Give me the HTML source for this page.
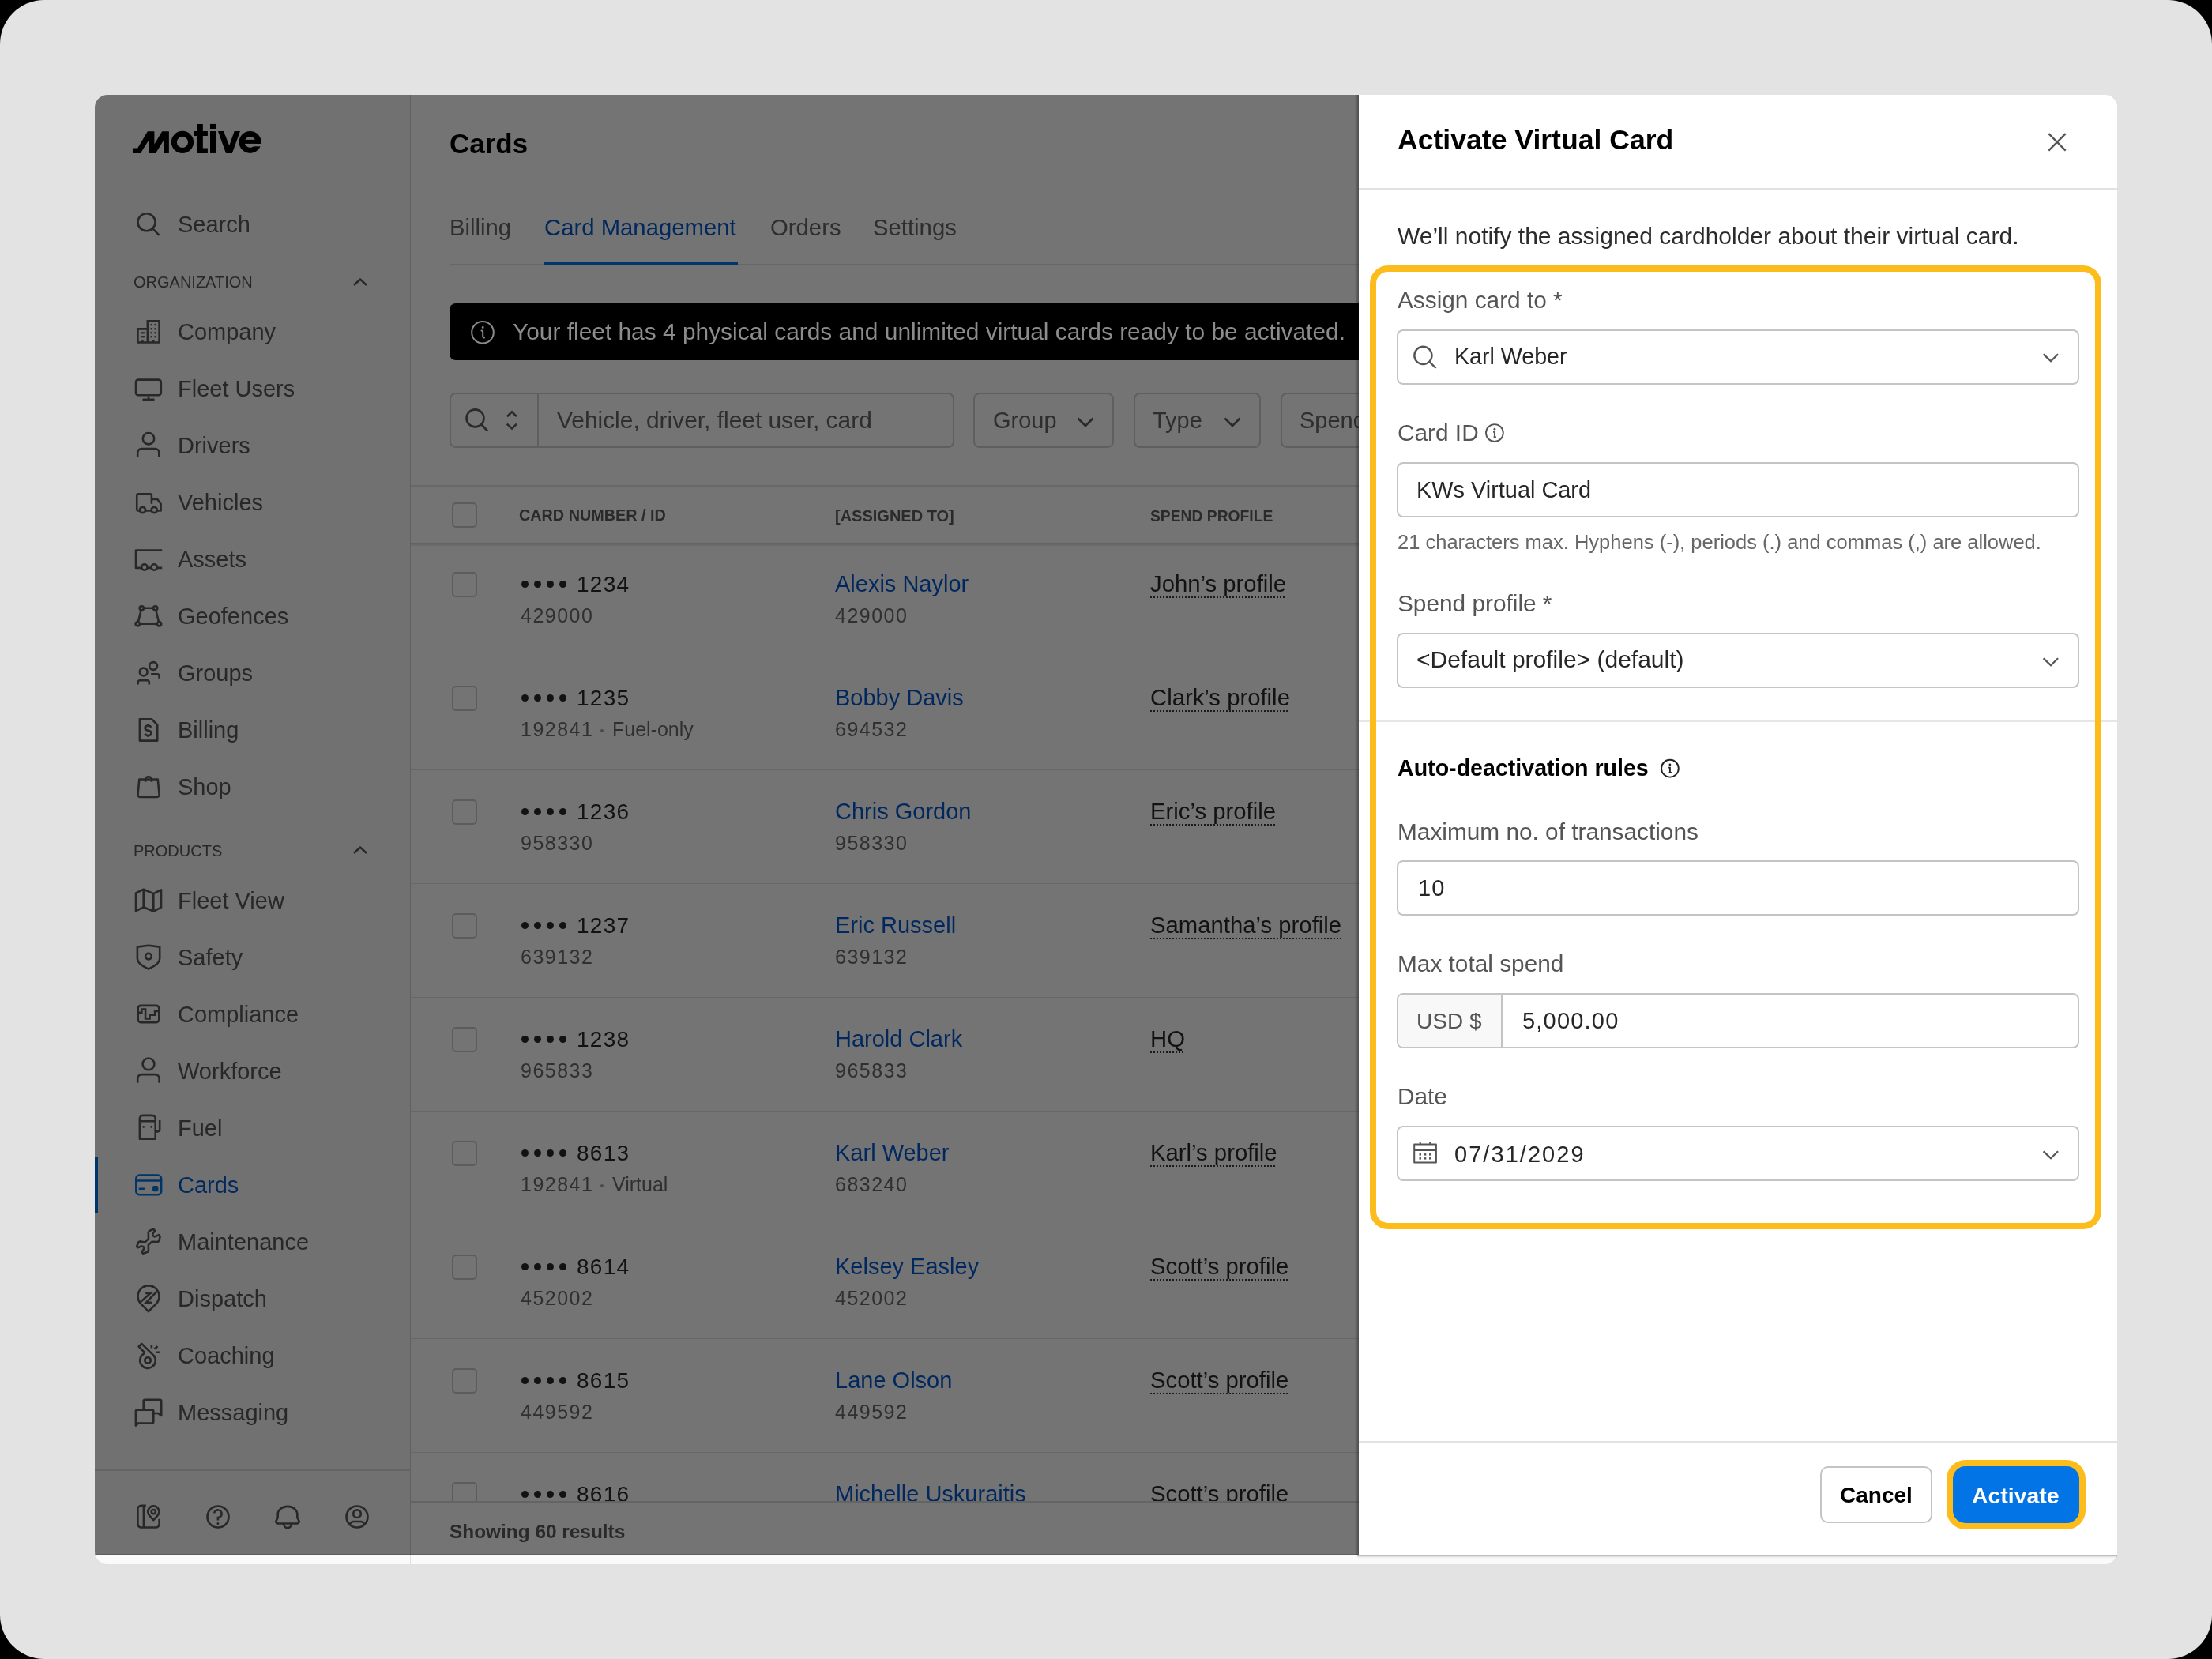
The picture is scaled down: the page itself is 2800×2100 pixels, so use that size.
<!DOCTYPE html><html><head><meta charset="utf-8"><style>
html,body{margin:0;padding:0;}
body{width:2800px;height:2100px;background:#000;position:relative;overflow:hidden;font-family:"Liberation Sans", sans-serif;}
.t{position:absolute;white-space:nowrap;will-change:transform;}
.r{position:absolute;box-sizing:border-box;}
.ic{position:absolute;overflow:visible;}
</style></head><body>
<div class="r" style="left:0px;top:0px;width:2800px;height:2100px;background:#e3e3e3;border-radius:56px;"></div>
<div class="r" style="left:120px;top:120px;width:2560px;height:1860px;border-radius:16px;overflow:hidden;background:#fafafa;">
<div class="r" style="left:0px;top:0px;width:400px;height:1848px;background:#717171;"></div>
<div class="r" style="left:400px;top:0px;width:1200px;height:1848px;background:#747474;"></div>
<div class="r" style="left:399px;top:0px;width:1px;height:1860px;background:#616161;"></div>
<div class="r" style="left:399px;top:1848px;width:1px;height:12px;background:#e0e0e0;"></div>
</div>
<svg class="ic" style="left:160px;top:150px" width="180" height="55" viewBox="0 0 180 55">
<path fill="#000" d="M7.97 43.94 L7.97 37.43 L14.24 37.43 L26.85 16.27 L35.40 16.27 L35.40 32.55 L45.16 16.27 L53.87 16.27 L53.87 43.94 L47.03 43.94 L47.03 27.67 L37.03 43.94 L28.07 43.94 L28.07 27.67 L17.90 43.94 Z"/>
<circle cx="70.96" cy="29.95" r="10.6" fill="none" stroke="#000" stroke-width="7"/>
<path fill="#000" d="M89.76 6.92 H96.83 V16.03 H102.9 V21.97 H96.83 V37.43 H102.9 V43.94 H89.76 V21.97 H85.6 V16.03 H89.76 Z"/>
<rect x="106" y="6.92" width="7.1" height="6.1" fill="#000"/>
<rect x="106" y="16.03" width="7.1" height="27.91" fill="#000"/>
<path fill="#000" d="M115.96 16.03 H123.0 L130.2 34.2 L136.7 16.03 H144.0 L133.9 43.94 H126.0 Z"/>
<circle cx="156.6" cy="29.95" r="10.45" fill="none" stroke="#000" stroke-width="7"/>
<rect x="157" y="31.9" width="15" height="3.4" fill="#717171"/>
<rect x="148" y="26.85" width="22.3" height="5.05" fill="#000"/>
</svg>
<div class="t" style="left:225.0px;top:269.5px;font-size:29px;line-height:29px;color:#282828;">Search</div>
<svg class="ic" style="left:168px;top:264px" width="40" height="40" viewBox="0 0 40 40" fill="none" stroke="#282828" stroke-width="2.6" stroke-linejoin="round"><circle cx="17.5" cy="17.25" r="11"/><path d="M25.6 25.6 L33.6 33.8"/></svg>
<div class="t" style="left:169.0px;top:347.1px;font-size:20px;line-height:20px;color:#282828;">ORGANIZATION</div>
<svg class="ic" style="left:440px;top:344.5px" width="32" height="32" viewBox="0 0 32 32" fill="none" stroke="#282828" stroke-width="2.4" stroke-linejoin="round"><path d="M8 16 L16 8.5 L24 16"/></svg>
<div class="t" style="left:169.0px;top:1067.1px;font-size:20px;line-height:20px;color:#282828;">PRODUCTS</div>
<svg class="ic" style="left:440px;top:1064px" width="32" height="32" viewBox="0 0 32 32" fill="none" stroke="#282828" stroke-width="2.4" stroke-linejoin="round"><path d="M8 16 L16 8.5 L24 16"/></svg>
<div class="t" style="left:225.0px;top:405.5px;font-size:29px;line-height:29px;color:#282828;">Company</div>
<div class="t" style="left:225.0px;top:477.5px;font-size:29px;line-height:29px;color:#282828;">Fleet Users</div>
<div class="t" style="left:225.0px;top:549.5px;font-size:29px;line-height:29px;color:#282828;">Drivers</div>
<div class="t" style="left:225.0px;top:621.5px;font-size:29px;line-height:29px;color:#282828;">Vehicles</div>
<div class="t" style="left:225.0px;top:693.5px;font-size:29px;line-height:29px;color:#282828;">Assets</div>
<div class="t" style="left:225.0px;top:765.5px;font-size:29px;line-height:29px;color:#282828;">Geofences</div>
<div class="t" style="left:225.0px;top:837.5px;font-size:29px;line-height:29px;color:#282828;">Groups</div>
<div class="t" style="left:225.0px;top:909.5px;font-size:29px;line-height:29px;color:#282828;">Billing</div>
<div class="t" style="left:225.0px;top:981.5px;font-size:29px;line-height:29px;color:#282828;">Shop</div>
<div class="t" style="left:225.0px;top:1125.5px;font-size:29px;line-height:29px;color:#282828;">Fleet View</div>
<div class="t" style="left:225.0px;top:1197.5px;font-size:29px;line-height:29px;color:#282828;">Safety</div>
<div class="t" style="left:225.0px;top:1269.5px;font-size:29px;line-height:29px;color:#282828;">Compliance</div>
<div class="t" style="left:225.0px;top:1341.5px;font-size:29px;line-height:29px;color:#282828;">Workforce</div>
<div class="t" style="left:225.0px;top:1413.5px;font-size:29px;line-height:29px;color:#282828;">Fuel</div>
<div class="t" style="left:225.0px;top:1485.5px;font-size:29px;line-height:29px;color:#00285f;">Cards</div>
<div class="t" style="left:225.0px;top:1557.5px;font-size:29px;line-height:29px;color:#282828;">Maintenance</div>
<div class="t" style="left:225.0px;top:1629.5px;font-size:29px;line-height:29px;color:#282828;">Dispatch</div>
<div class="t" style="left:225.0px;top:1701.5px;font-size:29px;line-height:29px;color:#282828;">Coaching</div>
<div class="t" style="left:225.0px;top:1773.5px;font-size:29px;line-height:29px;color:#282828;">Messaging</div>
<div class="r" style="left:120px;top:1464px;width:4px;height:72px;background:#003569;"></div>
<svg class="ic" style="left:168px;top:400px" width="40" height="40" viewBox="0 0 40 40" fill="none" stroke="#282828" stroke-width="2.6" stroke-linejoin="round"><path stroke-linecap="square" stroke-linejoin="miter" d="M6.4 33.5V16.4H18.85 M18.85 33.5V6.3H33.6V33.5H6.4"/><g fill="#282828" stroke="none"><rect x="10.1" y="20.2" width="4.8" height="2.2"/><rect x="10.1" y="25.1" width="4.8" height="2.3"/><rect x="11.2" y="30.1" width="2.5" height="3.4"/><rect x="25" y="30.1" width="2.6" height="3.4"/><rect x="22.55" y="9.95" width="2.3" height="2.3"/><rect x="27.45" y="9.95" width="2.3" height="2.3"/><rect x="22.55" y="15.05" width="2.3" height="2.3"/><rect x="27.45" y="15.05" width="2.3" height="2.3"/><rect x="22.55" y="20.05" width="2.3" height="2.3"/><rect x="27.45" y="20.05" width="2.3" height="2.3"/><rect x="22.55" y="25.05" width="2.3" height="2.3"/><rect x="27.45" y="25.05" width="2.3" height="2.3"/></g></svg>
<svg class="ic" style="left:168px;top:472px" width="40" height="40" viewBox="0 0 40 40" fill="none" stroke="#282828" stroke-width="2.6" stroke-linejoin="round"><rect x="4" y="8.6" width="31.8" height="19.6" rx="3"/><path d="M20 29.6V33.8 M12.5 33.8H27.5"/></svg>
<svg class="ic" style="left:168px;top:544px" width="40" height="40" viewBox="0 0 40 40" fill="none" stroke="#282828" stroke-width="2.6" stroke-linejoin="round"><circle cx="20" cy="11.2" r="7.2"/><path d="M6.2 34.7V29A5 5 0 0 1 11.2 24H28.3A5 5 0 0 1 33.3 29V34.7"/></svg>
<svg class="ic" style="left:168px;top:616px" width="40" height="40" viewBox="0 0 40 40" fill="none" stroke="#282828" stroke-width="2.6" stroke-linejoin="round"><path d="M5.25 30.5V11.4A2 2 0 0 1 7.25 9.4H21.9A2 2 0 0 1 23.9 11.4V21.7 M23.9 16H31.2L35.6 21.7V30.5H30.8 M5.25 30.5H8.9 M16.1 30.5H23.6"/><circle cx="12.5" cy="29.5" r="3.6"/><circle cx="27.2" cy="29.5" r="3.6"/></svg>
<svg class="ic" style="left:168px;top:688px" width="40" height="40" viewBox="0 0 40 40" fill="none" stroke="#282828" stroke-width="2.6" stroke-linejoin="round"><path d="M37.2 8.6H4V30.9H11.2 M18.6 30.9H23.5 M30.9 30.9H37.2"/><circle cx="14.9" cy="30" r="3.7"/><circle cx="27.2" cy="30" r="3.7"/></svg>
<svg class="ic" style="left:168px;top:760px" width="40" height="40" viewBox="0 0 40 40" fill="none" stroke="#282828" stroke-width="2.6" stroke-linejoin="round"><circle cx="11.3" cy="9.8" r="2.6"/><circle cx="28.7" cy="9.8" r="2.6"/><circle cx="6.2" cy="29.8" r="2.6"/><circle cx="33.6" cy="29.8" r="2.6"/><path d="M13.9 9.8H26.1 M8.8 29.8H31 M10.7 12.3L6.8 27.3 M29.3 12.3L33 27.3"/></svg>
<svg class="ic" style="left:168px;top:832px" width="40" height="40" viewBox="0 0 40 40" fill="none" stroke="#282828" stroke-width="2.6" stroke-linejoin="round"><circle cx="13.7" cy="18.5" r="4.9"/><path d="M6.6 34.5V31.7A2.5 2.5 0 0 1 9.1 29.2H18.3A2.5 2.5 0 0 1 20.8 31.7V34.5"/><circle cx="26.1" cy="11" r="4.9"/><path d="M23.1 21.3H31.1A2.5 2.5 0 0 1 33.6 23.8V26.7"/></svg>
<svg class="ic" style="left:168px;top:904px" width="40" height="40" viewBox="0 0 40 40" fill="none" stroke="#282828" stroke-width="2.6" stroke-linejoin="round"><path d="M8.9 6.2H23.9L31.2 13.5V33.6H8.9Z"/><path stroke-linecap="butt" d="M23.3 16.8Q22.4 14.6 19.5 14.6Q15.6 14.6 15.6 17.6Q15.6 20.3 19.5 20.8Q23.5 21.3 23.5 24.1Q23.5 27 19.5 27Q16.5 27 15.5 24.8 M19.5 12.3V14.6 M19.5 27V29.1"/></svg>
<svg class="ic" style="left:168px;top:976px" width="40" height="40" viewBox="0 0 40 40" fill="none" stroke="#282828" stroke-width="2.6" stroke-linejoin="round"><path d="M8.3 10.5H31.8L33.6 30A3 3 0 0 1 30.6 33H9.5A3 3 0 0 1 6.5 30Z"/><path d="M16.1 13.8V11A3.9 3.9 0 0 1 23.9 11V13.8"/></svg>
<svg class="ic" style="left:168px;top:1120px" width="40" height="40" viewBox="0 0 40 40" fill="none" stroke="#282828" stroke-width="2.6" stroke-linejoin="round"><path d="M4 10.5L13.7 5.7L26.3 11.1L36 6.3V28.6L26.3 33.6L13.7 28.3L4 33.1Z M13.7 5.7V28.3 M26.3 11.1V33.6"/></svg>
<svg class="ic" style="left:168px;top:1192px" width="40" height="40" viewBox="0 0 40 40" fill="none" stroke="#282828" stroke-width="2.6" stroke-linejoin="round"><path d="M5.9 6.6L20 4.7L34.2 6.6V21.6Q34.2 28.5 20 34.6Q5.9 28.5 5.9 21.6Z"/><circle cx="20" cy="18.6" r="3.8"/></svg>
<svg class="ic" style="left:168px;top:1264px" width="40" height="40" viewBox="0 0 40 40" fill="none" stroke="#282828" stroke-width="2.6" stroke-linejoin="round"><rect x="6.7" y="8.9" width="26.6" height="21.2" rx="3.5"/><path stroke-linejoin="miter" d="M6.7 17.7H11.3V13.5H16.1V25.5H21.5V20.7H28.1V15.9H33.3"/></svg>
<svg class="ic" style="left:168px;top:1336px" width="40" height="40" viewBox="0 0 40 40" fill="none" stroke="#282828" stroke-width="2.6" stroke-linejoin="round"><circle cx="20" cy="10.9" r="7.4"/><path d="M6.2 34.7V29.1A5 5 0 0 1 11.2 24.1H28.6A5 5 0 0 1 33.6 29.1V34.7"/></svg>
<svg class="ic" style="left:168px;top:1408px" width="40" height="40" viewBox="0 0 40 40" fill="none" stroke="#282828" stroke-width="2.6" stroke-linejoin="round"><path d="M8.9 33.8V7.9A4 4 0 0 1 12.9 3.9H24.7A4 4 0 0 1 28.7 7.9V33.8Z M8.9 11.2H28.7 M28.7 24.4H31.7A2.5 2.5 0 0 0 34.2 21.9V10"/><g fill="#282828" stroke="none"><circle cx="13.7" cy="18.4" r="1.4"/><circle cx="23.6" cy="18.4" r="1.4"/></g></svg>
<svg class="ic" style="left:168px;top:1480px" width="40" height="40" viewBox="0 0 40 40" fill="none" stroke="#003569" stroke-width="2.6" stroke-linejoin="round"><rect x="4.3" y="7.5" width="31.8" height="24.8" rx="4.5"/><path d="M4.3 14.5H36.1 M7.7 24.7H14.9"/><rect x="25.1" y="21.1" width="7.3" height="7.2" rx="1.8" fill="#003569" stroke="none"/></svg>
<svg class="ic" style="left:168px;top:1552px" width="40" height="40" viewBox="0 0 40 40" fill="none" stroke="#282828" stroke-width="2.6" stroke-linejoin="round"><path d="M26.4 3.7L28.1 6.0L25.3 9.6Q25 12 26.6 12.9Q28.2 13.8 30 12.6L33.0 11.1L34.7 12.8L33.5 18.3L31.8 20L24.4 19.8L19.8 23.9L20.0 30.6L18.8 32.8L13.0 34.7L11.6 33.0L14.1 28.9Q14.8 26.7 13 25.8Q11.5 25 9.6 26.1L6.3 27.2L5.1 26.0L7.0 20.7L9.2 19.4L15.4 20.5L20.0 15.9L19.8 8.0L21.0 6.0Z"/></svg>
<svg class="ic" style="left:168px;top:1624px" width="40" height="40" viewBox="0 0 40 40" fill="none" stroke="#282828" stroke-width="2.6" stroke-linejoin="round"><path d="M20 36.2L10.36 26.35A13.5 13.5 0 1 1 29.64 26.35Z"/><path stroke-linejoin="miter" d="M9.6 24.4L22.4 13H16.2 M31.1 10.1L17 24.8H23.9"/></svg>
<svg class="ic" style="left:168px;top:1696px" width="40" height="40" viewBox="0 0 40 40" fill="none" stroke="#282828" stroke-width="2.6" stroke-linejoin="round"><path d="M11.3 4.9L7.6 8.4L14.6 15.6L13.85 17.7A9.8 9.8 0 1 0 26.85 20.1Z"/><circle cx="19.05" cy="25.9" r="3.7"/><path d="M23.9 6V10.6 M27.5 11.6L31.6 8.2 M29.2 15.8H33.9"/></svg>
<svg class="ic" style="left:168px;top:1768px" width="40" height="40" viewBox="0 0 40 40" fill="none" stroke="#282828" stroke-width="2.6" stroke-linejoin="round"><path d="M3.9 36.6V18.6Q3.9 16.6 5.9 16.6H24.3Q26.3 16.6 26.3 18.6V31.5Q26.3 33.5 24.3 33.5H7Z"/><path d="M13.7 16.6V5.9Q13.7 3.9 15.7 3.9H34.2Q36.2 3.9 36.2 5.9V23.9L32.1 21H26.3"/></svg>
<div class="r" style="left:120px;top:1860px;width:400px;height:2px;background:#646464;"></div>
<svg class="ic" style="left:168px;top:1900px" width="40" height="40" viewBox="0 0 40 40" fill="none" stroke="#282828" stroke-width="2.6" stroke-linejoin="round"><path d="M16.9 5.8H10.8A4.4 4.4 0 0 0 6.4 10.2V29.1A4.4 4.4 0 0 0 10.8 33.5H29.2A4.4 4.4 0 0 0 33.6 29.1V22.8 M13.9 5.8V33.5"/><path d="M26.3 24.2L21.28 18.52A7.1 7.1 0 1 1 31.32 18.52Z"/><circle cx="26.3" cy="13.6" r="2.6"/></svg>
<svg class="ic" style="left:256px;top:1900px" width="40" height="40" viewBox="0 0 40 40" fill="none" stroke="#282828" stroke-width="2.6" stroke-linejoin="round"><circle cx="20" cy="20" r="13.5"/><path stroke-linejoin="miter" d="M15.1 15.4A4.8 4.8 0 1 1 19.9 21V24.6"/><circle cx="19.9" cy="28.6" r="1.5" fill="#282828" stroke="none"/></svg>
<svg class="ic" style="left:344px;top:1900px" width="40" height="40" viewBox="0 0 40 40" fill="none" stroke="#282828" stroke-width="2.6" stroke-linejoin="round"><path d="M7.7 21V17A12.3 10.1 0 0 1 32.3 17V21L35 26.3L32.5 28.5H7.5L5 26.3Z"/><path d="M15 29A5 5 0 0 0 25 29"/></svg>
<svg class="ic" style="left:432px;top:1900px" width="40" height="40" viewBox="0 0 40 40" fill="none" stroke="#282828" stroke-width="2.6" stroke-linejoin="round"><circle cx="20" cy="20" r="13.5"/><circle cx="20" cy="16.15" r="4.8"/><path d="M10.9 29.2Q12.5 26 15.5 26H24.5Q27.5 26 29.1 29.2"/></svg>
<div class="t" style="left:569.0px;top:164.4px;font-size:35px;line-height:35px;color:#000;font-weight:700;">Cards</div>
<div class="t" style="left:569.0px;top:273.2px;font-size:29.3px;line-height:29.3px;color:#2e2e2e;">Billing</div>
<div class="t" style="left:689.0px;top:273.2px;font-size:29.3px;line-height:29.3px;color:#00285f;">Card Management</div>
<div class="t" style="left:975.0px;top:273.2px;font-size:29.3px;line-height:29.3px;color:#2e2e2e;">Orders</div>
<div class="t" style="left:1105.0px;top:273.2px;font-size:29.3px;line-height:29.3px;color:#2e2e2e;">Settings</div>
<div class="r" style="left:569px;top:334px;width:1151px;height:2px;background:#676767;"></div>
<div class="r" style="left:688px;top:332px;width:246px;height:4px;background:#003569;"></div>
<div class="r" style="left:569px;top:384px;width:1300px;height:72px;background:#000;border-radius:8px;"></div>
<svg class="ic" style="left:580px;top:400px" width="60" height="60" viewBox="0 0 60 60" fill="none" stroke="#8a8a8a" stroke-width="2" stroke-linejoin="round"><circle cx="31" cy="20.8" r="13.8"/><circle cx="31.2" cy="14.5" r="1.4" fill="#8a8a8a" stroke="none"/><path stroke-linecap="round" d="M29.5 18.6Q31.2 18.6 31.2 20.5V25.5Q31.2 27.6 33 27.6"/></svg>
<div class="t" style="left:648.5px;top:404.7px;font-size:29.9px;line-height:29.9px;color:#8c8c8c;">Your fleet has 4 physical cards and unlimited virtual cards ready to be activated.</div>
<div class="r" style="left:569px;top:497px;width:639px;height:70px;border:2px solid #5f5f5f;border-radius:8px;"></div>
<div class="r" style="left:680px;top:498px;width:2px;height:68px;background:#5f5f5f;"></div>
<svg class="ic" style="left:580px;top:505px" width="80" height="80" viewBox="0 0 80 80" fill="none" stroke="#2a2a2a" stroke-width="2.6" stroke-linejoin="round"><circle cx="21.5" cy="24.4" r="11"/><path d="M29.6 32.5L37.1 40.5"/><path stroke-linejoin="miter" d="M61.9 22.2L68 16.3L73.9 22.2 M61.7 31.6L68 37.5L74.1 31.6"/></svg>
<div class="t" style="left:705.0px;top:516.7px;font-size:29.9px;line-height:29.9px;color:#2e2e2e;">Vehicle, driver, fleet user, card</div>
<div class="r" style="left:1232px;top:497px;width:178px;height:70px;border:2px solid #5f5f5f;border-radius:8px;"></div>
<div class="t" style="left:1257.0px;top:517.5px;font-size:29px;line-height:29px;color:#2e2e2e;">Group</div>
<div class="r" style="left:1435px;top:497px;width:161px;height:70px;border:2px solid #5f5f5f;border-radius:8px;"></div>
<div class="t" style="left:1459.0px;top:517.5px;font-size:29px;line-height:29px;color:#2e2e2e;">Type</div>
<div class="r" style="left:1621px;top:497px;width:200px;height:70px;border:2px solid #5f5f5f;border-radius:8px;"></div>
<div class="t" style="left:1645.0px;top:517.5px;font-size:29px;line-height:29px;color:#2e2e2e;">Spend</div>
<svg class="ic" style="left:1354px;top:513.5px" width="40" height="40" viewBox="0 0 40 40" fill="none" stroke="#2a2a2a" stroke-width="2.6" stroke-linejoin="round"><path d="M10.4 15.5L20 25L29.6 15.5"/></svg>
<svg class="ic" style="left:1540px;top:513.5px" width="40" height="40" viewBox="0 0 40 40" fill="none" stroke="#2a2a2a" stroke-width="2.6" stroke-linejoin="round"><path d="M10.4 15.5L20 25L29.6 15.5"/></svg>
<div class="r" style="left:520px;top:614px;width:1200px;height:2px;background:#686868;"></div>
<div class="r" style="left:520px;top:687px;width:1200px;height:2px;background:#636363;"></div>
<div class="r" style="left:520px;top:689px;width:1200px;height:3px;background:linear-gradient(to bottom, rgba(0,0,0,0.12), rgba(0,0,0,0));"></div>
<div class="r" style="left:572px;top:636px;width:32px;height:32px;border:2px solid #5c5c5c;border-radius:5px;"></div>
<div class="t" style="left:657.0px;top:643.2px;font-size:19.8px;line-height:19.8px;color:#2a2a2a;font-weight:700;">CARD NUMBER / ID</div>
<div class="t" style="left:1057.0px;top:643.1px;font-size:20px;line-height:20px;color:#2a2a2a;font-weight:700;">[ASSIGNED TO]</div>
<div class="t" style="left:1456.0px;top:643.7px;font-size:19.3px;line-height:19.3px;color:#2a2a2a;font-weight:700;">SPEND PROFILE</div>
<div class="r" style="left:520px;top:689px;width:1200px;height:1211px;overflow:hidden;">
<div class="r" style="left:52px;top:35px;width:32px;height:32px;border:2px solid #5c5c5c;border-radius:5px;"></div>
<div class="r" style="left:139.5px;top:46.0px;width:9px;height:9px;border-radius:50%;background:#121212;"></div>
<div class="r" style="left:155.5px;top:46.0px;width:9px;height:9px;border-radius:50%;background:#121212;"></div>
<div class="r" style="left:171.5px;top:46.0px;width:9px;height:9px;border-radius:50%;background:#121212;"></div>
<div class="r" style="left:187.5px;top:46.0px;width:9px;height:9px;border-radius:50%;background:#121212;"></div>
<div class="t" style="left:210.0px;top:37.3px;font-size:28px;line-height:28px;color:#121212;letter-spacing:1.3px;">1234</div>
<div class="t" style="left:139.0px;top:77.8px;font-size:25px;line-height:25px;color:#303030;letter-spacing:1.5px;">429000</div>
<div class="t" style="left:537.0px;top:35.5px;font-size:29px;line-height:29px;color:#00285f;">Alexis Naylor</div>
<div class="t" style="left:537.0px;top:77.8px;font-size:25px;line-height:25px;color:#303030;letter-spacing:1.5px;">429000</div>
<div class="t" style="left:936.0px;top:35.2px;font-size:29.3px;line-height:29.3px;color:#121212;text-decoration:underline dotted #1a1a1a;text-decoration-thickness:2px;text-underline-offset:6px;">John’s profile</div>
<div class="r" style="left:0;top:141px;width:1200px;height:1px;background:#676767;"></div>
<div class="r" style="left:52px;top:179px;width:32px;height:32px;border:2px solid #5c5c5c;border-radius:5px;"></div>
<div class="r" style="left:139.5px;top:190.0px;width:9px;height:9px;border-radius:50%;background:#121212;"></div>
<div class="r" style="left:155.5px;top:190.0px;width:9px;height:9px;border-radius:50%;background:#121212;"></div>
<div class="r" style="left:171.5px;top:190.0px;width:9px;height:9px;border-radius:50%;background:#121212;"></div>
<div class="r" style="left:187.5px;top:190.0px;width:9px;height:9px;border-radius:50%;background:#121212;"></div>
<div class="t" style="left:210.0px;top:181.3px;font-size:28px;line-height:28px;color:#121212;letter-spacing:1.3px;">1235</div>
<div class="t" style="left:139.0px;top:221.8px;font-size:25px;line-height:25px;color:#303030;letter-spacing:1.5px;">192841</div>
<div class="r" style="left:240px;top:234px;width:4px;height:4px;border-radius:50%;background:#4a4a4a;"></div>
<div class="t" style="left:255.0px;top:221.8px;font-size:25px;line-height:25px;color:#303030;">Fuel-only</div>
<div class="t" style="left:537.0px;top:179.5px;font-size:29px;line-height:29px;color:#00285f;">Bobby Davis</div>
<div class="t" style="left:537.0px;top:221.8px;font-size:25px;line-height:25px;color:#303030;letter-spacing:1.5px;">694532</div>
<div class="t" style="left:936.0px;top:179.2px;font-size:29.3px;line-height:29.3px;color:#121212;text-decoration:underline dotted #1a1a1a;text-decoration-thickness:2px;text-underline-offset:6px;">Clark’s profile</div>
<div class="r" style="left:0;top:285px;width:1200px;height:1px;background:#676767;"></div>
<div class="r" style="left:52px;top:323px;width:32px;height:32px;border:2px solid #5c5c5c;border-radius:5px;"></div>
<div class="r" style="left:139.5px;top:334.0px;width:9px;height:9px;border-radius:50%;background:#121212;"></div>
<div class="r" style="left:155.5px;top:334.0px;width:9px;height:9px;border-radius:50%;background:#121212;"></div>
<div class="r" style="left:171.5px;top:334.0px;width:9px;height:9px;border-radius:50%;background:#121212;"></div>
<div class="r" style="left:187.5px;top:334.0px;width:9px;height:9px;border-radius:50%;background:#121212;"></div>
<div class="t" style="left:210.0px;top:325.3px;font-size:28px;line-height:28px;color:#121212;letter-spacing:1.3px;">1236</div>
<div class="t" style="left:139.0px;top:365.8px;font-size:25px;line-height:25px;color:#303030;letter-spacing:1.5px;">958330</div>
<div class="t" style="left:537.0px;top:323.5px;font-size:29px;line-height:29px;color:#00285f;">Chris Gordon</div>
<div class="t" style="left:537.0px;top:365.8px;font-size:25px;line-height:25px;color:#303030;letter-spacing:1.5px;">958330</div>
<div class="t" style="left:936.0px;top:323.2px;font-size:29.3px;line-height:29.3px;color:#121212;text-decoration:underline dotted #1a1a1a;text-decoration-thickness:2px;text-underline-offset:6px;">Eric’s profile</div>
<div class="r" style="left:0;top:429px;width:1200px;height:1px;background:#676767;"></div>
<div class="r" style="left:52px;top:467px;width:32px;height:32px;border:2px solid #5c5c5c;border-radius:5px;"></div>
<div class="r" style="left:139.5px;top:478.0px;width:9px;height:9px;border-radius:50%;background:#121212;"></div>
<div class="r" style="left:155.5px;top:478.0px;width:9px;height:9px;border-radius:50%;background:#121212;"></div>
<div class="r" style="left:171.5px;top:478.0px;width:9px;height:9px;border-radius:50%;background:#121212;"></div>
<div class="r" style="left:187.5px;top:478.0px;width:9px;height:9px;border-radius:50%;background:#121212;"></div>
<div class="t" style="left:210.0px;top:469.3px;font-size:28px;line-height:28px;color:#121212;letter-spacing:1.3px;">1237</div>
<div class="t" style="left:139.0px;top:509.8px;font-size:25px;line-height:25px;color:#303030;letter-spacing:1.5px;">639132</div>
<div class="t" style="left:537.0px;top:467.5px;font-size:29px;line-height:29px;color:#00285f;">Eric Russell</div>
<div class="t" style="left:537.0px;top:509.8px;font-size:25px;line-height:25px;color:#303030;letter-spacing:1.5px;">639132</div>
<div class="t" style="left:936.0px;top:467.2px;font-size:29.3px;line-height:29.3px;color:#121212;text-decoration:underline dotted #1a1a1a;text-decoration-thickness:2px;text-underline-offset:6px;">Samantha’s profile</div>
<div class="r" style="left:0;top:573px;width:1200px;height:1px;background:#676767;"></div>
<div class="r" style="left:52px;top:611px;width:32px;height:32px;border:2px solid #5c5c5c;border-radius:5px;"></div>
<div class="r" style="left:139.5px;top:622.0px;width:9px;height:9px;border-radius:50%;background:#121212;"></div>
<div class="r" style="left:155.5px;top:622.0px;width:9px;height:9px;border-radius:50%;background:#121212;"></div>
<div class="r" style="left:171.5px;top:622.0px;width:9px;height:9px;border-radius:50%;background:#121212;"></div>
<div class="r" style="left:187.5px;top:622.0px;width:9px;height:9px;border-radius:50%;background:#121212;"></div>
<div class="t" style="left:210.0px;top:613.3px;font-size:28px;line-height:28px;color:#121212;letter-spacing:1.3px;">1238</div>
<div class="t" style="left:139.0px;top:653.8px;font-size:25px;line-height:25px;color:#303030;letter-spacing:1.5px;">965833</div>
<div class="t" style="left:537.0px;top:611.5px;font-size:29px;line-height:29px;color:#00285f;">Harold Clark</div>
<div class="t" style="left:537.0px;top:653.8px;font-size:25px;line-height:25px;color:#303030;letter-spacing:1.5px;">965833</div>
<div class="t" style="left:936.0px;top:611.2px;font-size:29.3px;line-height:29.3px;color:#121212;text-decoration:underline dotted #1a1a1a;text-decoration-thickness:2px;text-underline-offset:6px;">HQ</div>
<div class="r" style="left:0;top:717px;width:1200px;height:1px;background:#676767;"></div>
<div class="r" style="left:52px;top:755px;width:32px;height:32px;border:2px solid #5c5c5c;border-radius:5px;"></div>
<div class="r" style="left:139.5px;top:766.0px;width:9px;height:9px;border-radius:50%;background:#121212;"></div>
<div class="r" style="left:155.5px;top:766.0px;width:9px;height:9px;border-radius:50%;background:#121212;"></div>
<div class="r" style="left:171.5px;top:766.0px;width:9px;height:9px;border-radius:50%;background:#121212;"></div>
<div class="r" style="left:187.5px;top:766.0px;width:9px;height:9px;border-radius:50%;background:#121212;"></div>
<div class="t" style="left:210.0px;top:757.3px;font-size:28px;line-height:28px;color:#121212;letter-spacing:1.3px;">8613</div>
<div class="t" style="left:139.0px;top:797.8px;font-size:25px;line-height:25px;color:#303030;letter-spacing:1.5px;">192841</div>
<div class="r" style="left:240px;top:810px;width:4px;height:4px;border-radius:50%;background:#4a4a4a;"></div>
<div class="t" style="left:255.0px;top:797.8px;font-size:25px;line-height:25px;color:#303030;">Virtual</div>
<div class="t" style="left:537.0px;top:755.5px;font-size:29px;line-height:29px;color:#00285f;">Karl Weber</div>
<div class="t" style="left:537.0px;top:797.8px;font-size:25px;line-height:25px;color:#303030;letter-spacing:1.5px;">683240</div>
<div class="t" style="left:936.0px;top:755.2px;font-size:29.3px;line-height:29.3px;color:#121212;text-decoration:underline dotted #1a1a1a;text-decoration-thickness:2px;text-underline-offset:6px;">Karl’s profile</div>
<div class="r" style="left:0;top:861px;width:1200px;height:1px;background:#676767;"></div>
<div class="r" style="left:52px;top:899px;width:32px;height:32px;border:2px solid #5c5c5c;border-radius:5px;"></div>
<div class="r" style="left:139.5px;top:910.0px;width:9px;height:9px;border-radius:50%;background:#121212;"></div>
<div class="r" style="left:155.5px;top:910.0px;width:9px;height:9px;border-radius:50%;background:#121212;"></div>
<div class="r" style="left:171.5px;top:910.0px;width:9px;height:9px;border-radius:50%;background:#121212;"></div>
<div class="r" style="left:187.5px;top:910.0px;width:9px;height:9px;border-radius:50%;background:#121212;"></div>
<div class="t" style="left:210.0px;top:901.3px;font-size:28px;line-height:28px;color:#121212;letter-spacing:1.3px;">8614</div>
<div class="t" style="left:139.0px;top:941.8px;font-size:25px;line-height:25px;color:#303030;letter-spacing:1.5px;">452002</div>
<div class="t" style="left:537.0px;top:899.5px;font-size:29px;line-height:29px;color:#00285f;">Kelsey Easley</div>
<div class="t" style="left:537.0px;top:941.8px;font-size:25px;line-height:25px;color:#303030;letter-spacing:1.5px;">452002</div>
<div class="t" style="left:936.0px;top:899.2px;font-size:29.3px;line-height:29.3px;color:#121212;text-decoration:underline dotted #1a1a1a;text-decoration-thickness:2px;text-underline-offset:6px;">Scott’s profile</div>
<div class="r" style="left:0;top:1005px;width:1200px;height:1px;background:#676767;"></div>
<div class="r" style="left:52px;top:1043px;width:32px;height:32px;border:2px solid #5c5c5c;border-radius:5px;"></div>
<div class="r" style="left:139.5px;top:1054.0px;width:9px;height:9px;border-radius:50%;background:#121212;"></div>
<div class="r" style="left:155.5px;top:1054.0px;width:9px;height:9px;border-radius:50%;background:#121212;"></div>
<div class="r" style="left:171.5px;top:1054.0px;width:9px;height:9px;border-radius:50%;background:#121212;"></div>
<div class="r" style="left:187.5px;top:1054.0px;width:9px;height:9px;border-radius:50%;background:#121212;"></div>
<div class="t" style="left:210.0px;top:1045.3px;font-size:28px;line-height:28px;color:#121212;letter-spacing:1.3px;">8615</div>
<div class="t" style="left:139.0px;top:1085.8px;font-size:25px;line-height:25px;color:#303030;letter-spacing:1.5px;">449592</div>
<div class="t" style="left:537.0px;top:1043.5px;font-size:29px;line-height:29px;color:#00285f;">Lane Olson</div>
<div class="t" style="left:537.0px;top:1085.8px;font-size:25px;line-height:25px;color:#303030;letter-spacing:1.5px;">449592</div>
<div class="t" style="left:936.0px;top:1043.2px;font-size:29.3px;line-height:29.3px;color:#121212;text-decoration:underline dotted #1a1a1a;text-decoration-thickness:2px;text-underline-offset:6px;">Scott’s profile</div>
<div class="r" style="left:0;top:1149px;width:1200px;height:1px;background:#676767;"></div>
<div class="r" style="left:52px;top:1187px;width:32px;height:32px;border:2px solid #5c5c5c;border-radius:5px;"></div>
<div class="r" style="left:139.5px;top:1198.0px;width:9px;height:9px;border-radius:50%;background:#121212;"></div>
<div class="r" style="left:155.5px;top:1198.0px;width:9px;height:9px;border-radius:50%;background:#121212;"></div>
<div class="r" style="left:171.5px;top:1198.0px;width:9px;height:9px;border-radius:50%;background:#121212;"></div>
<div class="r" style="left:187.5px;top:1198.0px;width:9px;height:9px;border-radius:50%;background:#121212;"></div>
<div class="t" style="left:210.0px;top:1189.3px;font-size:28px;line-height:28px;color:#121212;letter-spacing:1.3px;">8616</div>
<div class="t" style="left:537.0px;top:1187.5px;font-size:29px;line-height:29px;color:#00285f;">Michelle Uskuraitis</div>
<div class="t" style="left:936.0px;top:1187.2px;font-size:29.3px;line-height:29.3px;color:#121212;text-decoration:underline dotted #1a1a1a;text-decoration-thickness:2px;text-underline-offset:6px;">Scott’s profile</div>
</div>
<div class="r" style="left:520px;top:1900px;width:1200px;height:2px;background:#646464;"></div>
<div class="t" style="left:569.0px;top:1927.3px;font-size:24.4px;line-height:24.4px;color:#2a2a2a;font-weight:700;">Showing 60 results</div>
<div class="r" style="left:1715px;top:120px;width:5px;height:1848px;background:linear-gradient(to right, rgba(0,0,0,0), rgba(0,0,0,0.33));"></div>
<div class="r" style="left:1720px;top:120px;width:960px;height:1848px;background:#fff;border-top-right-radius:16px;"></div>
<div class="r" style="left:1718px;top:1968px;width:962px;height:5px;background:linear-gradient(to bottom, rgba(0,0,0,0.28), rgba(0,0,0,0.05) 60%, rgba(0,0,0,0));"></div>
<div class="r" style="left:120px;top:1967px;width:1598px;height:1px;background:rgba(0,0,0,0.18);"></div>
<div class="t" style="left:1769.0px;top:160.4px;font-size:35.6px;line-height:35.6px;color:#000;font-weight:700;">Activate Virtual Card</div>
<svg class="ic" style="left:2584px;top:160px" width="40" height="40" viewBox="0 0 40 40" fill="none" stroke="#555" stroke-width="2.4" stroke-linejoin="round"><path d="M9.3 9.2L30.7 30.6 M30.7 9.2L9.3 30.6"/></svg>
<div class="r" style="left:1720px;top:238px;width:960px;height:2px;background:#e2e2e2;"></div>
<div class="t" style="left:1769.0px;top:284.0px;font-size:30px;line-height:30px;color:#2b2b2b;">We’ll notify the assigned cardholder about their virtual card.</div>
<div class="r" style="left:1734px;top:336px;width:926px;height:1220px;border:8px solid #fcbc1b;border-radius:23px;"></div>
<div class="t" style="left:1769.0px;top:364.5px;font-size:29.8px;line-height:29.8px;color:#555555;">Assign card to *</div>
<div class="r" style="left:1768px;top:417px;width:864px;height:70px;border:2px solid #c4c4c4;border-radius:8px;background:#fff;"></div>
<svg class="ic" style="left:1780px;top:432px" width="40" height="40" viewBox="0 0 40 40" fill="none" stroke="#555" stroke-width="2.4" stroke-linejoin="round"><circle cx="21.4" cy="17.9" r="11.1"/><path d="M29.3 25.8L37.6 34"/></svg>
<div class="t" style="left:1841.0px;top:437.3px;font-size:28.6px;line-height:28.6px;color:#262626;">Karl Weber</div>
<svg class="ic" style="left:2576px;top:433px" width="40" height="40" viewBox="0 0 40 40" fill="none" stroke="#555" stroke-width="2.3" stroke-linejoin="round"><path stroke-linejoin="miter" d="M10.6 15.3L20 24.2L29.1 15.3"/></svg>
<div class="t" style="left:1769.0px;top:533.0px;font-size:29.8px;line-height:29.8px;color:#555555;">Card ID</div>
<svg class="ic" style="left:1870px;top:530px" width="40" height="40" viewBox="0 0 40 40" fill="none" stroke="#555" stroke-width="1.9" stroke-linejoin="round"><circle cx="21.9" cy="18" r="10.9"/><path stroke-linejoin="miter" d="M20.1 16.9H21.9V23.3 M20.6 23.3H23.9"/><circle cx="21.9" cy="13.2" r="1.4" fill="#555" stroke="none"/></svg>
<div class="r" style="left:1768px;top:585px;width:864px;height:70px;border:2px solid #c4c4c4;border-radius:8px;background:#fff;"></div>
<div class="t" style="left:1793.0px;top:606.2px;font-size:28.9px;line-height:28.9px;color:#262626;">KWs Virtual Card</div>
<div class="t" style="left:1769.0px;top:674.2px;font-size:25.5px;line-height:25.5px;color:#666;">21 characters max. Hyphens (-), periods (.) and commas (,) are allowed.</div>
<div class="t" style="left:1769.0px;top:748.7px;font-size:29.8px;line-height:29.8px;color:#555555;">Spend profile *</div>
<div class="r" style="left:1768px;top:801px;width:864px;height:70px;border:2px solid #c4c4c4;border-radius:8px;background:#fff;"></div>
<div class="t" style="left:1793.0px;top:820.1px;font-size:30px;line-height:30px;color:#262626;">&lt;Default profile&gt; (default)</div>
<svg class="ic" style="left:2576px;top:818px" width="40" height="40" viewBox="0 0 40 40" fill="none" stroke="#555" stroke-width="2.3" stroke-linejoin="round"><path stroke-linejoin="miter" d="M10.6 15.3L20 24.2L29.1 15.3"/></svg>
<div class="r" style="left:1720px;top:912px;width:960px;height:2px;background:#e6e6e6;"></div>
<div class="r" style="left:1734px;top:900px;width:8px;height:30px;background:#fcbc1b;"></div>
<div class="r" style="left:2652px;top:900px;width:8px;height:30px;background:#fcbc1b;"></div>
<div class="t" style="left:1769.0px;top:958.0px;font-size:28.6px;line-height:28.6px;color:#000;font-weight:700;">Auto-deactivation rules</div>
<svg class="ic" style="left:2092px;top:950px" width="40" height="40" viewBox="0 0 40 40" fill="none" stroke="#222" stroke-width="1.9" stroke-linejoin="round"><circle cx="21.9" cy="22.7" r="10.9"/><path stroke-linejoin="miter" d="M20.1 21.6H21.9V28 M20.6 28H23.9"/><circle cx="21.9" cy="17.9" r="1.4" fill="#222" stroke="none"/></svg>
<div class="t" style="left:1769.0px;top:1037.8px;font-size:29.8px;line-height:29.8px;color:#555555;">Maximum no. of transactions</div>
<div class="r" style="left:1768px;top:1089px;width:864px;height:70px;border:2px solid #c4c4c4;border-radius:8px;background:#fff;"></div>
<div class="t" style="left:1795.0px;top:1110.0px;font-size:29px;line-height:29px;color:#262626;letter-spacing:1px;">10</div>
<div class="t" style="left:1769.0px;top:1204.8px;font-size:29.8px;line-height:29.8px;color:#555555;">Max total spend</div>
<div class="r" style="left:1768px;top:1257px;width:864px;height:70px;border:2px solid #c4c4c4;border-radius:8px;background:#fff;"></div>
<div class="r" style="left:1770px;top:1259px;width:131px;height:66px;background:#f8f8f8;border-top-left-radius:6px;border-bottom-left-radius:6px;"></div>
<div class="r" style="left:1900px;top:1259px;width:2px;height:66px;background:#c4c4c4;"></div>
<div class="t" style="left:1793.0px;top:1278.8px;font-size:28px;line-height:28px;color:#555;">USD $</div>
<div class="t" style="left:1927.0px;top:1278.0px;font-size:29px;line-height:29px;color:#262626;letter-spacing:1.2px;">5,000.00</div>
<div class="t" style="left:1769.0px;top:1373.2px;font-size:29.8px;line-height:29.8px;color:#555555;">Date</div>
<div class="r" style="left:1768px;top:1425px;width:864px;height:70px;border:2px solid #c4c4c4;border-radius:8px;background:#fff;"></div>
<svg class="ic" style="left:1780px;top:1430px" width="60" height="60" viewBox="0 0 60 60" fill="none" stroke="#555" stroke-width="2" stroke-linejoin="round"><rect x="10.2" y="18.4" width="27.7" height="23.1"/><path d="M10.2 26H37.9 M17.7 15.2V18.4 M30.2 15.2V18.4"/><g fill="#555" stroke="none"><rect x="16.5" y="30.1" width="2.5" height="2.5"/><rect x="22.8" y="30.1" width="2.5" height="2.5"/><rect x="29" y="30.1" width="2.5" height="2.5"/><rect x="16.5" y="35.1" width="2.5" height="2.5"/><rect x="22.8" y="35.1" width="2.5" height="2.5"/><rect x="29" y="35.1" width="2.5" height="2.5"/></g></svg>
<div class="t" style="left:1841.0px;top:1446.5px;font-size:29px;line-height:29px;color:#262626;letter-spacing:2.05px;">07/31/2029</div>
<svg class="ic" style="left:2576px;top:1442px" width="40" height="40" viewBox="0 0 40 40" fill="none" stroke="#555" stroke-width="2.3" stroke-linejoin="round"><path stroke-linejoin="miter" d="M10.6 15.3L20 24.2L29.1 15.3"/></svg>
<div class="r" style="left:1720px;top:1824px;width:960px;height:2px;background:#e2e2e2;"></div>
<div class="r" style="left:2304px;top:1856px;width:142px;height:72px;border:2px solid #c4c4c4;border-radius:10px;background:#fff;"></div>
<div class="t" style="left:2329.0px;top:1878.9px;font-size:28px;line-height:28px;color:#000;font-weight:700;">Cancel</div>
<div class="r" style="left:2464px;top:1848px;width:176px;height:88px;background:#fcbc1b;border-radius:24px;"></div>
<div class="r" style="left:2472px;top:1856px;width:160px;height:72px;background:#0374e6;border-radius:16px;"></div>
<div class="t" style="left:2496.0px;top:1878.6px;font-size:28.4px;line-height:28.4px;color:#fff;font-weight:700;">Activate</div>
</body></html>
